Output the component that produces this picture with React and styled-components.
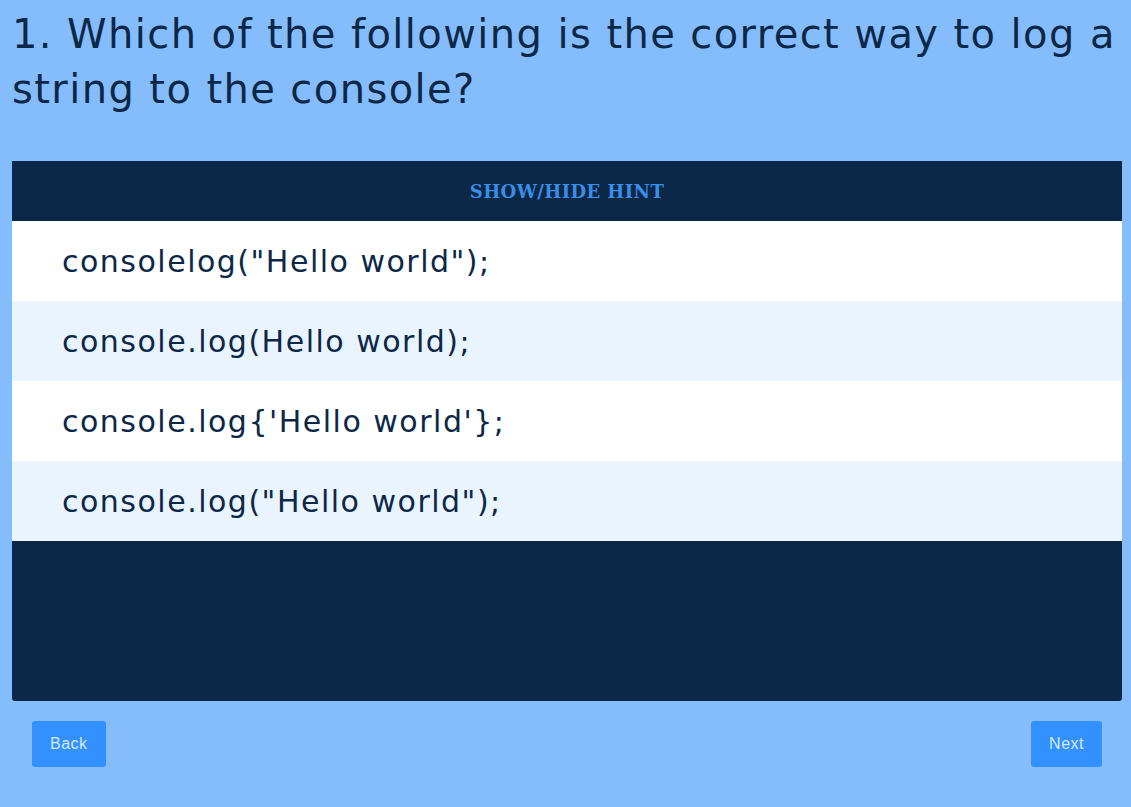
import React, { useState } from 'react';
import styled, { createGlobalStyle } from 'styled-components';

const options = [
  'consolelog("Hello world");',
  'console.log(Hello world);',
  "console.log{'Hello world'};",
  'console.log("Hello world");',
];

const GlobalStyle = createGlobalStyle`
  html, body {
    margin: 0;
    padding: 0;
    background: #85bdfc;
  }
  body {
    font-family: 'DejaVu Sans', sans-serif;
  }
`;

const Page = styled.div`
  padding: 7px 9px 40px 12px;
`;

const Question = styled.h1`
  margin: 0 0 44px;
  font-size: 40px;
  line-height: 55px;
  font-weight: normal;
  letter-spacing: 1.4px;
  color: #0b2849;
`;

const Panel = styled.div`
  background: #0b2849;
  border-radius: 0 0 3px 3px;
  overflow: hidden;
`;

const HintToggle = styled.button`
  display: block;
  width: 100%;
  height: 60px;
  border: none;
  background: transparent;
  color: #3a8ee6;
  font-family: 'DejaVu Serif', serif;
  font-weight: bold;
  font-size: 18px;
  letter-spacing: 0.4px;
  cursor: pointer;
`;

const Hint = styled.p`
  margin: 0;
  padding: 0 50px 16px;
  color: #9cc8ff;
  font-size: 16px;
`;

const Option = styled.div`
  display: flex;
  align-items: center;
  height: 80px;
  padding: 0 50px;
  background: ${(p) => (p.$alt ? '#eaf4ff' : '#ffffff')};
  color: #0b2849;
  font-size: 30px;
  letter-spacing: 1.5px;
  cursor: pointer;
`;

const Footer = styled.div`
  height: 160px;
`;

const Nav = styled.div`
  display: flex;
  justify-content: space-between;
  padding: 20px 20px 0;
`;

const NavButton = styled.button`
  height: 46px;
  padding: 0 18px;
  border: none;
  border-radius: 3px;
  background: #3391ff;
  color: #d4e9ff;
  font-family: 'Liberation Sans', Arial, sans-serif;
  font-size: 16px;
  letter-spacing: 0.5px;
  cursor: pointer;
`;

export default function App() {
  const [showHint, setShowHint] = useState(false);

  return (
    <Page>
      <GlobalStyle />
      <Question>
        1. Which of the following is the correct way to log a string to the console?
      </Question>
      <Panel>
        <HintToggle onClick={() => setShowHint(!showHint)}>SHOW/HIDE HINT</HintToggle>
        {showHint && <Hint>Look closely at the dot and the quotes.</Hint>}
        {options.map((opt, i) => (
          <Option key={i} $alt={i % 2 === 1}>
            {opt}
          </Option>
        ))}
        <Footer />
      </Panel>
      <Nav>
        <NavButton>Back</NavButton>
        <NavButton>Next</NavButton>
      </Nav>
    </Page>
  );
}
